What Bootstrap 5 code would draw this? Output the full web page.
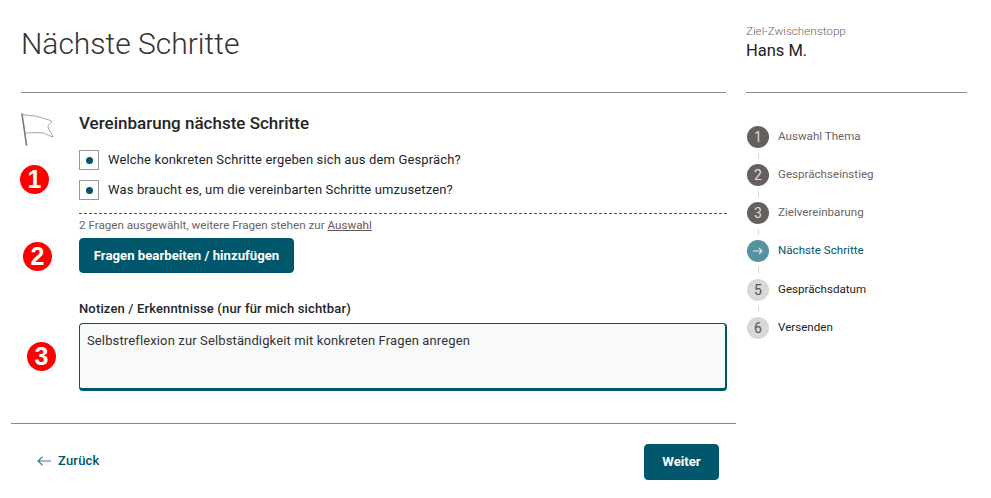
<!DOCTYPE html>
<html lang="de">

<head>
  <meta charset="UTF-8" />
  <title>Nächste Schritte</title>
  <link href="https://cdn.jsdelivr.net/npm/bootstrap@5.3.0/dist/css/bootstrap.min.css" rel="stylesheet">
  <style>
    body {
      font-family: Roboto, sans-serif;
      color: #212529;
      background: #fff;
    }

    .page-wrap {
      width: 991px;
      height: 498px;
      overflow: hidden;
    }

    /* linke Spalte */
    .main-col {
      width: 725px;
      margin-left: 11px;
    }

    .head-box {
      height: 93px;
      margin: 0 10px;
      border-bottom: 1px solid #8a8a8a;
    }

    .page-title {
      font-size: 30px;
      font-weight: 300;
      line-height: 38px;
      margin: 0;
      padding-top: 25px;
      color: #333;
    }

    .body-box {
      position: relative;
      margin: 0 9px 0 10px;
      height: 330px;
      padding: 20px 0 0 58px;
    }

    .flag-icon {
      position: absolute;
      left: 0;
      top: 20px;
    }

    .sec-title {
      font-size: 17px;
      font-weight: 500;
      line-height: 20px;
      margin: 0 0 17px;
    }

    .q-row {
      height: 20px;
      margin-bottom: 10px;
      font-size: 13px;
      letter-spacing: .14px;
    }

    .q-box {
      width: 20px;
      height: 20px;
      border: 1px solid #999;
      margin-right: 9px;
    }

    .q-dot {
      width: 7px;
      height: 7px;
      border-radius: 50%;
      background: #00566a;
    }

    .hint-text {
      border-top: 1px dashed #555;
      margin-top: 13px;
      padding-top: 3px;
      font-size: 11.65px;
      line-height: 16px;
      color: #6b6463;
    }

    .hint-text a {
      color: #6b5553;
    }

    .btn-teal {
      background: #00566a;
      border-color: #00566a;
      color: #fff;
      font-size: 13.2px;
      font-weight: 700;
      border-radius: 4px;
    }

    .btn-teal:hover {
      background: #00566a;
      color: #fff;
    }

    .btn-edit {
      margin-top: 5px;
      width: 215px;
      height: 35px;
      padding: 0;
    }

    .note-label {
      display: block;
      margin: 28px 0 6px;
      font-size: 13px;
      font-weight: 500;
      line-height: 16px;
      letter-spacing: .15px;
    }

    .note-area {
      width: 648px;
      height: 68px;
      background: #f7f9fa;
      border: 1px solid #00566a;
      border-right-width: 2px;
      border-bottom-width: 3px;
      border-radius: 4px;
      padding: 7px;
      font-size: 13px;
      line-height: 20px;
      letter-spacing: .13px;
      color: #333;
      resize: none;
      display: block;
    }

    /* Nummern in Rot, liegen über dem Inhalt */
    .red-mark {
      position: absolute;
      width: 29px;
      height: 29px;
      border-radius: 50%;
      background: #f00;
      color: #fff;
      font-family: "Liberation Sans", sans-serif;
      font-size: 25px;
      font-weight: 700;
      line-height: 29px;
      text-align: center;
    }

    .mark-one {
      left: -1px;
      top: 72px;
    }

    .mark-two {
      left: 2px;
      top: 149px;
    }

    .mark-three {
      left: 6px;
      top: 249px;
    }

    .foot-box {
      border-top: 1px solid #8a8a8a;
      height: 70px;
      padding: 20px 17px 0 26px;
    }

    .back-link {
      color: #00566a;
      font-size: 13px;
      font-weight: 500;
      text-decoration: none;
      letter-spacing: .2px;
      gap: 7px;
      height: 34px;
    }

    .btn-next {
      width: 75px;
      height: 36px;
      padding: 0;
    }

    /* rechte Spalte */
    .side-col {
      width: 221px;
      margin-left: 10px;
    }

    .side-head {
      height: 93px;
      border-bottom: 1px solid #8a8a8a;
      padding-top: 23px;
    }

    .side-sub {
      font-size: 11.7px;
      font-weight: 300;
      line-height: 16px;
      color: #6b6463;
    }

    .side-name {
      font-size: 16.5px;
      line-height: 24px;
      color: #222;
    }

    .step-list {
      margin: 0;
      padding: 33px 0 0 1px;
      list-style: none;
    }

    .step-item {
      position: relative;
      display: flex;
      align-items: center;
      height: 22px;
      margin-bottom: 16px;
      font-size: 11.6px;
      color: #222;
    }

    .step-item:not(:last-child)::after {
      content: "";
      position: absolute;
      left: 11px;
      top: 27px;
      width: 1px;
      height: 6px;
      background: #d5d5d5;
    }

    .step-num {
      width: 22px;
      height: 22px;
      border-radius: 50%;
      margin-right: 9px;
      background: #d8d8d8;
      color: #555;
      font-size: 14px;
      font-weight: 400;
      line-height: 22px;
      text-align: center;
      flex-shrink: 0;
    }

    .step-done {
      color: #6b6463;
    }

    .step-done .step-num {
      background: #665f5f;
      color: #ddd;
    }

    .step-now {
      color: #00566a;
      margin-bottom: 17px;
    }

    .step-now .step-num {
      background: #55919f;
      display: flex;
      align-items: center;
      justify-content: center;
    }
  </style>
</head>

<body>
  <div class="page-wrap d-flex">
    <div class="main-col">
      <div class="head-box">
        <h1 class="page-title">Nächste Schritte</h1>
      </div>

      <div class="body-box">
        <svg class="flag-icon" width="35" height="34" viewBox="0 0 35 34" fill="none">
          <path d="M1 1 L5.500 32" stroke="#777" stroke-width="1.6" stroke-linecap="round" />
          <path d="M1.500 1.500 C8 3 12 2 18 4 C23 6 27 6 31 8.500 C29 11 27 12 27 14 C28 18 31 21 32 24 C29 23 26 22 23 20 C16 19 10 20 4 20" stroke="#999" stroke-width=".9" />
        </svg>

        <h2 class="sec-title">Vereinbarung nächste Schritte</h2>

        <div class="q-row d-flex align-items-center">
          <span class="q-box d-flex align-items-center justify-content-center"><span class="q-dot"></span></span>
          Welche konkreten Schritte ergeben sich aus dem Gespräch?
        </div>
        <div class="q-row d-flex align-items-center">
          <span class="q-box d-flex align-items-center justify-content-center"><span class="q-dot"></span></span>
          Was braucht es, um die vereinbarten Schritte umzusetzen?
        </div>

        <div class="hint-text">2 Fragen ausgewählt, weitere Fragen stehen zur <a href="#">Auswahl</a></div>

        <button type="button" class="btn btn-teal btn-edit">Fragen bearbeiten / hinzufügen</button>

        <label class="note-label" for="notes">Notizen / Erkenntnisse (nur für mich sichtbar)</label>
        <textarea class="note-area" id="notes">Selbstreflexion zur Selbständigkeit mit konkreten Fragen anregen</textarea>

        <span class="red-mark mark-one">1</span>
        <span class="red-mark mark-two">2</span>
        <span class="red-mark mark-three">3</span>
      </div>

      <div class="foot-box d-flex justify-content-between">
        <a href="#" class="back-link d-flex align-items-center align-self-start">
          <svg width="14" height="10" viewBox="0 0 14 10" fill="none" stroke="#3f7f8f" stroke-width="1.2">
            <path d="M14 5H1M5.500 .8 1 5l4.500 4.200" />
          </svg>
          Zurück
        </a>
        <button type="button" class="btn btn-teal btn-next">Weiter</button>
      </div>
    </div>

    <div class="side-col">
      <div class="side-head">
        <div class="side-sub">Ziel-Zwischenstopp</div>
        <div class="side-name">Hans M.</div>
      </div>
      <ul class="step-list">
        <li class="step-item step-done"><span class="step-num">1</span>Auswahl Thema</li>
        <li class="step-item step-done"><span class="step-num">2</span>Gesprächseinstieg</li>
        <li class="step-item step-done"><span class="step-num">3</span>Zielvereinbarung</li>
        <li class="step-item step-now">
          <span class="step-num">
            <svg width="10" height="8" viewBox="0 0 10 8" fill="none" stroke="#dfeaed" stroke-width="1.100">
              <path d="M0 4h9M6 1l3 3-3 3" />
            </svg>
          </span>Nächste Schritte
        </li>
        <li class="step-item"><span class="step-num">5</span>Gesprächsdatum</li>
        <li class="step-item"><span class="step-num">6</span>Versenden</li>
      </ul>
    </div>
  </div>

  <script src="https://cdn.jsdelivr.net/npm/bootstrap@5.3.0/dist/js/bootstrap.bundle.min.js"></script>
</body>

</html>
